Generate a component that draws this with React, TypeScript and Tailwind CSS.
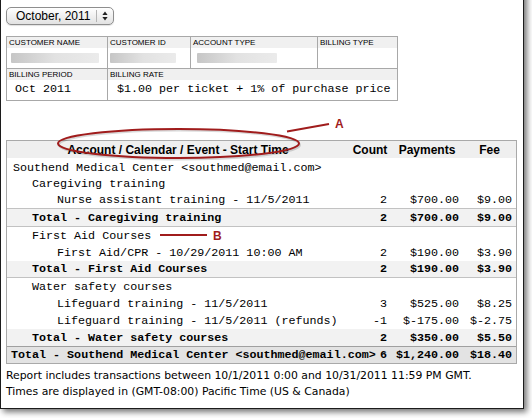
import React from "react";

type RowProps = {
  label: string;
  pad: string;
  count?: string;
  pay?: string;
  fee?: string;
  cls: string;
};

function Row({ label, pad, count, pay, fee, cls }: RowProps) {
  return (
    <div className={`flex items-center leading-[16px] ${cls}`}>
      <div className={`flex-1 whitespace-nowrap ${pad}`}>{label}</div>
      <div className="w-[12px] shrink-0 pr-[4px] flex justify-end whitespace-nowrap">{count}</div>
      <div className="w-[72px] shrink-0 pr-[4px] flex justify-end whitespace-nowrap">{pay}</div>
      <div className="w-[53px] shrink-0 pr-[4px] flex justify-end whitespace-nowrap">{fee}</div>
    </div>
  );
}

function Bar({ cls }: { cls: string }) {
  return (
    <div
      className={`h-[10px] mt-[5px] rounded-[1px] bg-linear-to-r from-[#c6c6c6] via-[#e2e2e2] to-[#ebebeb] blur-[0.6px] ${cls}`}
    />
  );
}

export default function App() {
  return (
    <div className="relative w-[532px] h-[418px] bg-white overflow-hidden">
      <div className="w-[524px] h-[419px] -mt-[10px] bg-white border-l border-r border-b border-[#1c1c1c] shadow-[3px_3px_6px_rgba(0,0,0,0.55)] pt-[17px] pl-[5px] text-black">
        {/* Select */}
        <div className="w-[108px] h-[18px] rounded-[5px] border border-[#8e8e8e] bg-linear-to-b from-white to-[#e2e2e2] shadow-[0_1px_1px_rgba(0,0,0,0.12)] flex items-center">
          <div className="w-[89px] pl-[9px] font-['Liberation_Sans',Arial,sans-serif] text-[12px] leading-[16px] whitespace-nowrap">
            October, 2011
          </div>
          <div className="w-px h-[12px] bg-[#b4b4b4]" />
          <div className="flex-1 flex items-center justify-center">
            <svg width="6" height="10" viewBox="0 0 6 10">
              <path d="M3 0.5 L5.6 4 L0.4 4 Z" fill="#222" />
              <path d="M3 9.5 L5.6 6 L0.4 6 Z" fill="#222" />
            </svg>
          </div>
        </div>

        {/* Info table */}
        <div className="mt-[11px] w-[392px] border border-[#a8a8a8] font-['Liberation_Sans',Arial,sans-serif]">
          <div className="flex">
            <div className="w-[100px]">
              <div className="h-[11px] bg-[#f0f0f0] text-[8px] leading-[11px] pl-[2px] whitespace-nowrap">CUSTOMER NAME</div>
              <div className="h-[20px] flex">
                <Bar cls="ml-[4px] w-[88px]" />
              </div>
            </div>
            <div className="w-[83px] border-l border-[#a8a8a8]">
              <div className="h-[11px] bg-[#f0f0f0] text-[8px] leading-[11px] pl-[2px] whitespace-nowrap">CUSTOMER ID</div>
              <div className="h-[20px] flex">
                <Bar cls="ml-[2px] w-[66px]" />
              </div>
            </div>
            <div className="w-[127px] border-l border-[#a8a8a8]">
              <div className="h-[11px] bg-[#f0f0f0] text-[8px] leading-[11px] pl-[2px] whitespace-nowrap">ACCOUNT TYPE</div>
              <div className="h-[20px] flex">
                <Bar cls="ml-[6px] w-[80px]" />
              </div>
            </div>
            <div className="w-[80px] border-l border-[#a8a8a8]">
              <div className="h-[11px] bg-[#f0f0f0] text-[8px] leading-[11px] pl-[2px] whitespace-nowrap">BILLING TYPE</div>
              <div className="h-[20px]" />
            </div>
          </div>
          <div className="flex border-t border-[#a8a8a8]">
            <div className="w-[100px]">
              <div className="h-[11px] bg-[#f0f0f0] text-[8px] leading-[11px] pl-[2px] whitespace-nowrap">BILLING PERIOD</div>
              <div className="h-[20px] flex items-center pl-[8px] font-['Liberation_Mono','Courier_New',monospace] text-[11.7px] whitespace-nowrap">
                Oct 2011
              </div>
            </div>
            <div className="flex-1 border-l border-[#a8a8a8]">
              <div className="h-[11px] bg-[#f0f0f0] text-[8px] leading-[11px] pl-[2px] whitespace-nowrap">BILLING RATE</div>
              <div className="h-[20px] flex items-center pl-[9px] font-['Liberation_Mono','Courier_New',monospace] text-[11.7px] whitespace-nowrap">
                $1.00 per ticket + 1% of purchase price
              </div>
            </div>
          </div>
        </div>

        {/* Main report table */}
        <div className="mt-[39px] w-[511px] border border-[#a9a9a9]">
          <div className="h-[17px] bg-[#efefef] flex items-center font-['Liberation_Sans',Arial,sans-serif] font-bold text-[12px] leading-[16px]">
            <div className="flex-1 text-center whitespace-nowrap">Account / Calendar / Event - Start Time</div>
            <div className="w-[42px] text-center">Count</div>
            <div className="w-[72px] text-center">Payments</div>
            <div className="w-[53px] text-center">Fee</div>
          </div>
          <div className="pt-[2px] font-['Liberation_Mono','Courier_New',monospace] text-[11.7px]">
            <Row cls="h-[16px]" pad="pl-[6px]" label="Southend Medical Center <southmed@email.com>" />
            <Row cls="h-[16px]" pad="pl-[25px]" label="Caregiving training" />
            <Row cls="h-[16px]" pad="pl-[50px]" label="Nurse assistant training - 11/5/2011" count="2" pay="$700.00" fee="$9.00" />
            <Row
              cls="h-[19px] bg-[#f2f2f2] border-t border-b border-[#c2c2c2] font-bold"
              pad="pl-[25px]"
              label="Total - Caregiving training"
              count="2"
              pay="$700.00"
              fee="$9.00"
            />
            <Row cls="h-[17px]" pad="pl-[25px]" label="First Aid Courses" />
            <Row cls="h-[17px]" pad="pl-[50px]" label="First Aid/CPR - 10/29/2011 10:00 AM" count="2" pay="$190.00" fee="$3.90" />
            <Row
              cls="h-[17px] bg-[#f2f2f2] border-b border-[#c2c2c2] font-bold"
              pad="pl-[25px]"
              label="Total - First Aid Courses"
              count="2"
              pay="$190.00"
              fee="$3.90"
            />
            <Row cls="h-[17px]" pad="pl-[25px]" label="Water safety courses" />
            <Row cls="h-[17px]" pad="pl-[50px]" label="Lifeguard training - 11/5/2011" count="3" pay="$525.00" fee="$8.25" />
            <Row cls="h-[17px]" pad="pl-[50px]" label="Lifeguard training - 11/5/2011 (refunds)" count="-1" pay="$-175.00" fee="$-2.75" />
            <Row
              cls="h-[17px] bg-[#f2f2f2] font-bold"
              pad="pl-[25px]"
              label="Total - Water safety courses"
              count="2"
              pay="$350.00"
              fee="$5.50"
            />
            <Row
              cls="h-[17px] bg-[#e3e3e3] border-t border-[#a0a0a0] font-bold"
              pad="pl-[4px]"
              label="Total - Southend Medical Center <southmed@email.com>"
              count="6"
              pay="$1,240.00"
              fee="$18.40"
            />
          </div>
        </div>

        <div className="mt-[4px] font-['DejaVu_Sans',Verdana,sans-serif] text-[10.85px] leading-[16px] whitespace-nowrap">
          <div>Report includes transactions between 10/1/2011 0:00 and 10/31/2011 11:59 PM GMT.</div>
          <div>Times are displayed in (GMT-08:00) Pacific Time (US &amp; Canada)</div>
        </div>
      </div>

      {/* Annotations */}
      <svg className="absolute left-0 top-0 pointer-events-none" width="532" height="418" viewBox="0 0 532 418">
        <ellipse cx="179.5" cy="145" rx="120.5" ry="14.5" fill="none" stroke="rgba(0,0,0,0.15)" strokeWidth="2" />
        <ellipse cx="178.5" cy="143.5" rx="120.5" ry="14.5" fill="none" stroke="#a01c1c" strokeWidth="2" />
        <line x1="287" y1="131.5" x2="329" y2="124" stroke="#a01c1c" strokeWidth="2" />
        <text x="335" y="127.5" fontFamily="Liberation Sans, Arial, sans-serif" fontWeight="bold" fontSize="12" fill="#a01c1c">
          A
        </text>
        <line x1="160" y1="235" x2="207" y2="235" stroke="#a01c1c" strokeWidth="2" />
        <text x="213" y="240" fontFamily="Liberation Sans, Arial, sans-serif" fontWeight="bold" fontSize="12" fill="#a01c1c">
          B
        </text>
      </svg>
    </div>
  );
}
